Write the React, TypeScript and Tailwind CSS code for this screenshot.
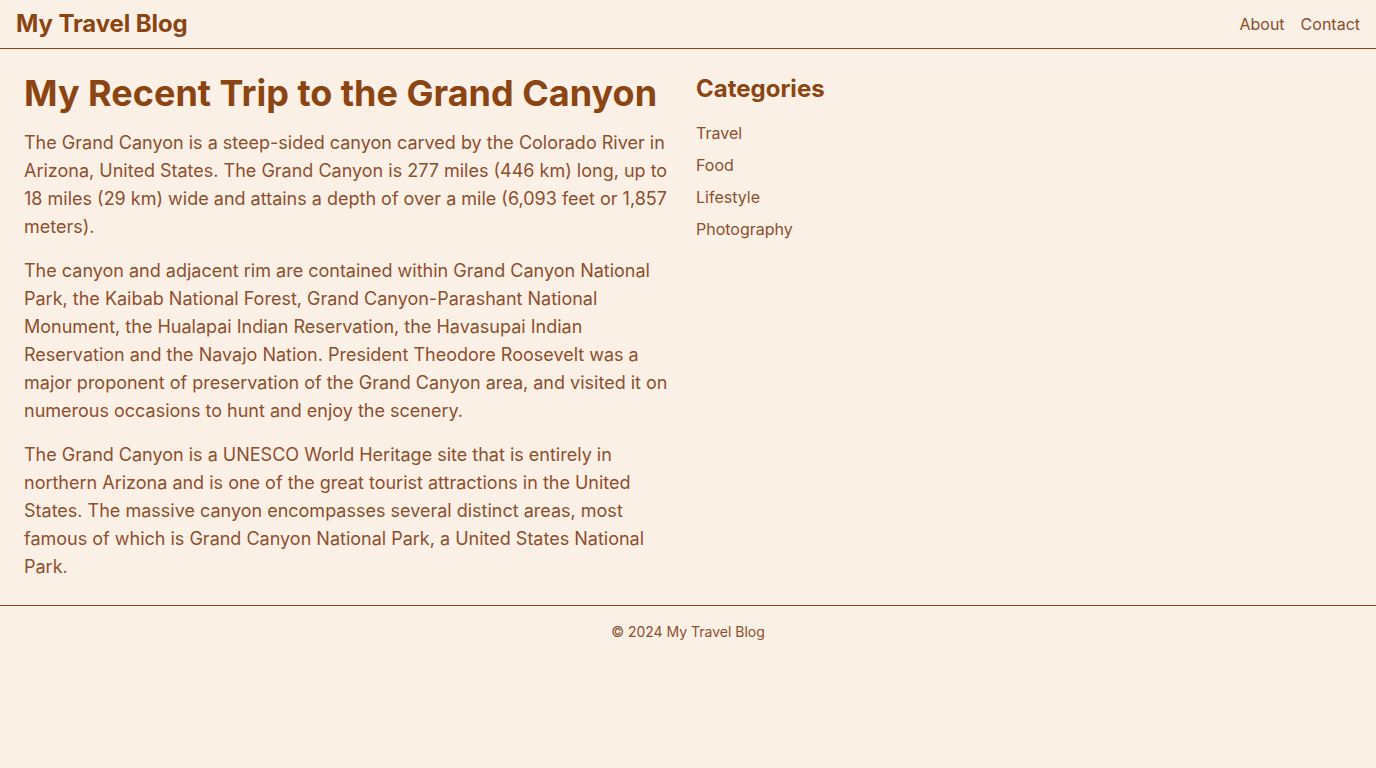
export default function App() {
  return (
    <div className="min-h-screen bg-[#faf0e6] text-[#8f4f2f]" style={{ fontFamily: "Inter, 'Noto Sans', sans-serif" }}>
      <header className="flex items-center justify-between border-b border-[#8b4513] py-2 pl-4 pr-4">
        <h1 className="text-2xl font-bold tracking-[-0.1px] text-[#8b4513]">My Travel Blog</h1>
        <nav className="flex gap-4 text-base">
          <a href="#">About</a>
          <a href="#">Contact</a>
        </nav>
      </header>
      <div className="flex gap-6 p-6">
        <main className="w-[648px] shrink-0">
          <h2 className="mb-4 text-4xl font-bold text-[#8b4513]">My Recent Trip to the Grand Canyon</h2>
          <p className="mb-4 text-lg">
            The Grand Canyon is a steep-sided canyon carved by the Colorado River in Arizona, United States. The Grand Canyon is 277 miles (446 km) long, up to 18 miles (29 km) wide and attains a depth of over a mile (6,093 feet or 1,857 meters).
          </p>
          <p className="mb-4 text-lg">
            The canyon and adjacent rim are contained within Grand Canyon National Park, the Kaibab National Forest, Grand Canyon-Parashant National Monument, the Hualapai Indian Reservation, the Havasupai Indian Reservation and the Navajo Nation. President Theodore Roosevelt was a major proponent of preservation of the Grand Canyon area, and visited it on numerous occasions to hunt and enjoy the scenery.
          </p>
          <p className="text-lg">
            The Grand Canyon is a UNESCO World Heritage site that is entirely in northern Arizona and is one of the great tourist attractions in the United States. The massive canyon encompasses several distinct areas, most famous of which is Grand Canyon National Park, a United States National Park.
          </p>
        </main>
        <aside className="flex-1">
          <h2 className="mb-4 text-2xl font-bold text-[#8b4513]">Categories</h2>
          <ul className="flex flex-col gap-2 text-base">
            <li><a href="#">Travel</a></li>
            <li><a href="#">Food</a></li>
            <li><a href="#">Lifestyle</a></li>
            <li><a href="#">Photography</a></li>
          </ul>
        </aside>
      </div>
      <footer className="border-t border-[#8b4513] py-4 text-center text-sm">
        © 2024 My Travel Blog
      </footer>
    </div>
  );
}
